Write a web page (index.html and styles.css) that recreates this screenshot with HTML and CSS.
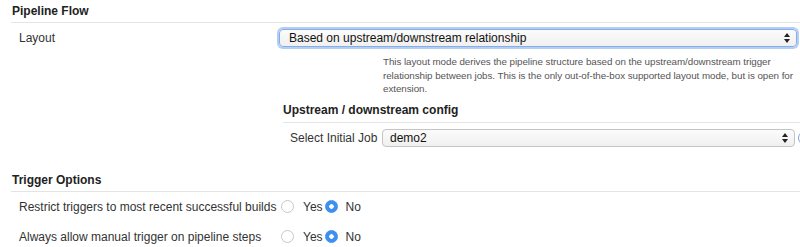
FILE: index.html
```html
<!DOCTYPE html>
<html lang="en">
<head>
  <meta charset="UTF-8" />
  <title>Pipeline Flow</title>
  <link rel="stylesheet" href="styles.css">
</head>
<body>
  <div class="page">
    <!-- Pipeline Flow -->
    <div class="section-title">Pipeline Flow</div>
    <div class="row">
      <div class="label">Layout</div>
      <div class="select-wrap focused">
        <select class="select">
          <option>Based on upstream/downstream relationship</option>
        </select>
      </div>
    </div>
    <div class="help">This layout mode derives the pipeline structure based on the upstream/downstream trigger relationship between jobs. This is the only out-of-the-box supported layout mode, but is open for extension.</div>

    <div class="subsection">
      <div class="sub-title">Upstream / downstream config</div>
      <div class="sub-row">
        <div class="sub-label">Select Initial Job</div>
        <div class="select-wrap small">
          <select class="select">
            <option>demo2</option>
          </select>
        </div>
        <span class="help-icon"></span>
      </div>
    </div>

    <!-- Trigger Options -->
    <div class="section-title trigger">Trigger Options</div>
    <div class="radio-row">
      <div class="label">Restrict triggers to most recent successful builds</div>
      <label class="radio"><input type="radio" name="restrict"> Yes</label>
      <label class="radio"><input type="radio" name="restrict" checked> No</label>
    </div>
    <div class="radio-row">
      <div class="label">Always allow manual trigger on pipeline steps</div>
      <label class="radio"><input type="radio" name="manual"> Yes</label>
      <label class="radio"><input type="radio" name="manual" checked> No</label>
    </div>
  </div>
</body>
</html>
```

FILE: styles.css
```css
body {
  margin: 0;
  font-family: "Liberation Sans", Arial, sans-serif;
  font-size: 12px;
  color: #333;
  background: #fff;
  overflow: hidden;
}
.page {
  padding: 3px 0 0 11px;
}
.section-title {
  font-weight: bold;
  color: #222;
  line-height: 16px;
  padding: 0 0 3px 1px;
  border-bottom: 1px solid #e4e4e4;
}
.section-title.trigger {
  margin-top: 25px;
}
.row {
  display: flex;
  align-items: center;
  padding-top: 6px;
}
.label {
  width: 260px;
  padding-left: 8px;
  flex-shrink: 0;
}
.select-wrap {
  position: relative;
  width: 518px;
  height: 18px;
  flex-shrink: 0;
}
.select-wrap::before,
.select-wrap::after {
  content: "";
  position: absolute;
  right: 7px;
  border-left: 3px solid transparent;
  border-right: 3px solid transparent;
  pointer-events: none;
}
.select-wrap::before {
  top: 4px;
  border-bottom: 4px solid #222;
}
.select-wrap::after {
  top: 10px;
  border-top: 4px solid #222;
}
.select {
  appearance: none;
  -webkit-appearance: none;
  width: 100%;
  height: 18px;
  margin: 0;
  padding: 0 0 0 9px;
  font: 12px "Liberation Sans", Arial, sans-serif;
  color: #111;
  background: linear-gradient(#fbfbfb, #f0f0f0);
  border: 1px solid #c4c4c4;
  border-radius: 4px;
}
.focused .select {
  border-color: #86ade8;
  box-shadow: 0 0 0 2px #b3cdf3;
}
.help {
  margin: 8px 0 0 372px;
  font-size: 9.8px;
  line-height: 13.5px;
  letter-spacing: -0.05px;
  color: #555;
}
.subsection {
  margin: 6px 0 0 272px;
}
.sub-title {
  font-weight: bold;
  color: #222;
  line-height: 16px;
  padding-bottom: 4px;
  border-bottom: 1px solid #e4e4e4;
}
.sub-row {
  display: flex;
  align-items: center;
  padding-top: 6px;
}
.sub-label {
  width: 92px;
  padding-left: 7px;
  flex-shrink: 0;
}
.select-wrap.small {
  width: 413px;
}
.select-wrap.small .select {
  padding-left: 7px;
}
.help-icon {
  width: 12px;
  height: 12px;
  margin-left: 3px;
  border-radius: 50%;
  border: 1px solid #7ca4d8;
  flex-shrink: 0;
}
.radio-row {
  display: flex;
  align-items: center;
  height: 30px;
}
.radio-row .label {
  width: 262px;
}
.radio {
  display: flex;
  align-items: center;
  gap: 9px;
  margin-right: 2px;
}
.radio + .radio {
  gap: 8px;
}
.radio input {
  appearance: none;
  -webkit-appearance: none;
  margin: 0;
  width: 13px;
  height: 13px;
  border: 1px solid #c8c8c8;
  border-radius: 50%;
  background: #fff;
}
.radio input:checked {
  border-color: #3d8ff0;
  background: radial-gradient(circle, #fff 0 2px, #3d8ff0 2.5px);
}
```
